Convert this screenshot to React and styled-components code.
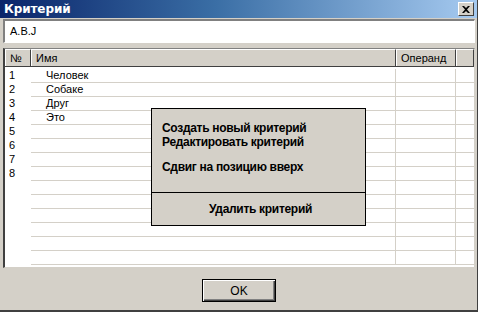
import React from 'react';
import styled, { createGlobalStyle } from 'styled-components';

const GlobalStyle = createGlobalStyle`
  html, body {
    margin: 0;
    padding: 0;
    background: #d4d0c8;
  }
  body {
    font-family: Tahoma, "Liberation Sans", "DejaVu Sans", sans-serif;
    font-size: 11px;
  }
`;

const rows = [
  { num: '1', name: 'Человек' },
  { num: '2', name: 'Собаке' },
  { num: '3', name: 'Друг' },
  { num: '4', name: 'Это' },
  { num: '5', name: '' },
  { num: '6', name: '' },
  { num: '7', name: '' },
  { num: '8', name: '' },
  { num: '', name: '' },
  { num: '', name: '' },
  { num: '', name: '' },
  { num: '', name: '' },
  { num: '', name: '' },
  { num: '', name: '' },
];

function CriteriaDialog() {
  return (
    <Window>
      <TitleBar>
        <Title>Критерий</Title>
        <CloseButton>
          <svg width="8" height="7" viewBox="0 0 8 7">
            <path d="M0 0 L2 0 L4 2 L6 0 L8 0 L5 3.5 L8 7 L6 7 L4 5 L2 7 L0 7 L3 3.5 Z" fill="#000" />
          </svg>
        </CloseButton>
      </TitleBar>
      <Content>
        <FilterField>A.B.J</FilterField>
        <Grid>
          <HeaderRow>
            <HeaderCell>№</HeaderCell>
            <HeaderCell>Имя</HeaderCell>
            <HeaderCell>Операнд</HeaderCell>
            <HeaderCell />
          </HeaderRow>
          <Rows>
            {rows.map((r, i) => (
              <Row key={i}>
                <NumCell>{r.num}</NumCell>
                <NameCell>{r.name}</NameCell>
                <Cell />
                <Cell $last />
              </Row>
            ))}
          </Rows>
          <PopupMenu>
            <MenuGroup>
              <MenuItem>Создать новый критерий</MenuItem>
              <MenuItem>Редактировать критерий</MenuItem>
              <MenuItem $gap>Сдвиг на позицию вверх</MenuItem>
            </MenuGroup>
            <MenuFooter>Удалить критерий</MenuFooter>
          </PopupMenu>
        </Grid>
      </Content>
      <Footer>
        <OkButton>OK</OkButton>
      </Footer>
    </Window>
  );
}

const Window = styled.div`
  width: 478px;
  height: 312px;
  box-sizing: border-box;
  background: #d4d0c8;
  border-right: 1px solid #404040;
  border-bottom: 2px solid #404040;
  display: flex;
  flex-direction: column;
  overflow: hidden;
`;

const TitleBar = styled.div`
  height: 18px;
  flex: none;
  display: flex;
  align-items: center;
  justify-content: space-between;
  padding: 0 3px 0 4px;
  background: linear-gradient(to right, #0a246a 0%, #3a6ea5 45%, #a6caf0 100%);
`;

const Title = styled.span`
  color: #fff;
  font-weight: bold;
  font-size: 12px;
  font-family: Tahoma, "DejaVu Sans", "Liberation Sans", sans-serif;
  letter-spacing: -0.1px;
`;

const CloseButton = styled.div`
  width: 16px;
  height: 14px;
  box-sizing: border-box;
  background: #d4d0c8;
  border-top: 1px solid #fff;
  border-left: 1px solid #fff;
  border-right: 1px solid #404040;
  border-bottom: 1px solid #404040;
  display: flex;
  align-items: center;
  justify-content: center;
`;

const Content = styled.div`
  padding: 1px 2px 0 3px;
  display: flex;
  flex-direction: column;
`;

const FilterField = styled.div`
  height: 24px;
  box-sizing: border-box;
  background: #fff;
  border-top: 2px solid #808080;
  border-left: 2px solid #808080;
  border-right: 1px solid #fff;
  border-bottom: 1px solid #fff;
  padding: 4px 0 0 5px;
  color: #000;
  font-family: "Liberation Sans", Arial, sans-serif;
  font-size: 11px;
`;

const Grid = styled.div`
  position: relative;
  margin-top: 5px;
  height: 220px;
  box-sizing: border-box;
  background: #fff;
  border-top: 1px solid #808080;
  border-left: 2px solid #404040;
  border-right: 1px solid #d4d0c8;
  border-bottom: 1px solid #d4d0c8;
  font-family: "Liberation Sans", Arial, sans-serif;
  font-size: 11px;
`;

const columns = '26px 365px 60px 1fr';

const HeaderRow = styled.div`
  display: grid;
  grid-template-columns: ${columns};
  height: 17px;
  border-bottom: 1px solid #404040;
`;

const HeaderCell = styled.div`
  box-sizing: border-box;
  background: #d4d0c8;
  border-top: 1px solid #fff;
  border-left: 1px solid #fff;
  border-right: 1px solid #404040;
  padding: 1px 0 0 4px;
  color: #000;
  line-height: 14px;
`;

const Rows = styled.div`
  padding-top: 2px;
`;

const Row = styled.div`
  display: grid;
  grid-template-columns: ${columns};
  height: 14px;
  line-height: 13px;
  color: #000;
`;

const NumCell = styled.div`
  padding-left: 4px;
`;

const Cell = styled.div`
  border-bottom: 1px solid #d4d0c8;
  border-right: ${(p) => (p.$last ? 'none' : '1px solid #d4d0c8')};
`;

const NameCell = styled(Cell)`
  padding-left: 15px;
`;

const PopupMenu = styled.div`
  position: absolute;
  left: 146px;
  top: 59px;
  width: 215px;
  height: 118px;
  box-sizing: border-box;
  background: #d4d0c8;
  border: 1px solid #000;
  display: flex;
  flex-direction: column;
  font-family: "Liberation Sans", Arial, sans-serif;
  font-size: 12px;
  font-weight: bold;
  color: #000;
`;

const MenuGroup = styled.div`
  flex: 1;
  padding: 12px 0 0 10px;
  border-bottom: 1px solid #000;
`;

const MenuItem = styled.div`
  line-height: 14px;
  margin-top: ${(p) => (p.$gap ? '11px' : '0')};
  letter-spacing: -0.3px;
`;

const MenuFooter = styled.div`
  height: 32px;
  display: flex;
  align-items: center;
  justify-content: center;
  padding-left: 4px;
  letter-spacing: -0.3px;
`;

const Footer = styled.div`
  flex: 1;
  display: flex;
  justify-content: center;
  padding: 11px 0 0 0;
`;

const OkButton = styled.button`
  width: 74px;
  height: 23px;
  box-sizing: border-box;
  background: #d4d0c8;
  border: 1px solid #000;
  box-shadow: inset 1px 1px 0 #fff, inset -1px -1px 0 #404040, inset -2px -2px 0 #808080;
  font-family: "Liberation Sans", Arial, sans-serif;
  font-size: 12px;
  color: #000;
  padding: 0;
  margin-left: 1px;
`;

export default function App() {
  return (
    <>
      <GlobalStyle />
      <CriteriaDialog />
    </>
  );
}
